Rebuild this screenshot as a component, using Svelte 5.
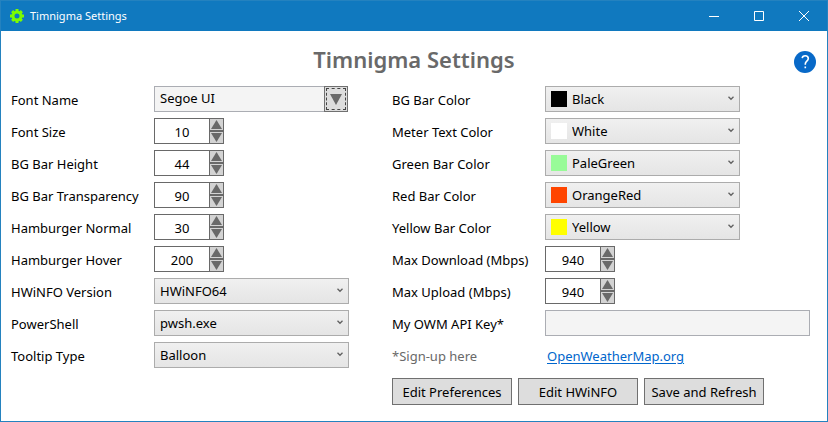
<script>
  let fontName = $state('Segoe UI');
  let apiKey = $state('');

  let leftNumbers = $state([
    { id: 'font-size', label: 'Font Size', value: 10 },
    { id: 'bar-height', label: 'BG Bar Height', value: 44 },
    { id: 'bar-transparency', label: 'BG Bar Transparency', value: 90 },
    { id: 'hamburger-normal', label: 'Hamburger Normal', value: 30 },
    { id: 'hamburger-hover', label: 'Hamburger Hover', value: 200 }
  ]);

  let choices = $state([
    { id: 'hwinfo', label: 'HWiNFO Version', value: 'HWiNFO64', options: ['HWiNFO64', 'HWiNFO32'] },
    { id: 'powershell', label: 'PowerShell', value: 'pwsh.exe', options: ['pwsh.exe', 'powershell.exe'] },
    { id: 'tooltip', label: 'Tooltip Type', value: 'Balloon', options: ['Balloon', 'Standard'] }
  ]);

  const colorNames = ['Black', 'White', 'PaleGreen', 'OrangeRed', 'Yellow'];
  let colors = $state([
    { id: 'bg-color', label: 'BG Bar Color', value: 'Black' },
    { id: 'text-color', label: 'Meter Text Color', value: 'White' },
    { id: 'green-color', label: 'Green Bar Color', value: 'PaleGreen' },
    { id: 'red-color', label: 'Red Bar Color', value: 'OrangeRed' },
    { id: 'yellow-color', label: 'Yellow Bar Color', value: 'Yellow' }
  ]);

  let speeds = $state([
    { id: 'max-download', label: 'Max Download (Mbps)', value: 940 },
    { id: 'max-upload', label: 'Max Upload (Mbps)', value: 940 }
  ]);
</script>

{#snippet spinner(item)}
  <label for={item.id}>{item.label}</label>
  <div class="spinner">
    <input id={item.id} type="text" inputmode="numeric" bind:value={item.value} />
    <div class="steps">
      <button type="button" aria-label="Increase {item.label}" onclick={() => item.value++}>
        <svg width="11" height="9" viewBox="0 0 11 9"><path d="M5.5 0 11 9H0z" /></svg>
      </button>
      <button type="button" aria-label="Decrease {item.label}" onclick={() => item.value--}>
        <svg width="11" height="9" viewBox="0 0 11 9"><path d="M0 0h11L5.5 9z" /></svg>
      </button>
    </div>
  </div>
{/snippet}

{#snippet chevron()}
  <svg class="chevron" width="6" height="5" viewBox="0 0 6 5"><path d="M.5.8 3 3.3 5.5.8" /></svg>
{/snippet}

<div class="window">
  <header class="titlebar">
    <svg class="gear" width="14" height="14" viewBox="0 0 14 14">
      <circle cx="7" cy="7" r="4" />
      <path d="M7 0v2.5M7 11.5V14M0 7h2.5M11.5 7H14M2.1 2.1l1.7 1.7M10.2 10.2l1.7 1.7M2.1 11.9l1.7-1.7M10.2 3.8l1.7-1.7" />
    </svg>
    <span class="caption">Timnigma Settings</span>
    <button type="button" aria-label="Minimize">
      <svg width="10" height="10" viewBox="0 0 10 10"><path d="M0 5.5h10" /></svg>
    </button>
    <button type="button" aria-label="Maximize">
      <svg width="10" height="10" viewBox="0 0 10 10"><path d="M.5.5h9v9h-9z" /></svg>
    </button>
    <button type="button" aria-label="Close">
      <svg width="10" height="10" viewBox="0 0 10 10"><path d="M0 0l10 10M10 0 0 10" /></svg>
    </button>
  </header>

  <main>
    <div class="heading">
      <h1>Timnigma Settings</h1>
      <button type="button" class="help" aria-label="Help">
        <svg width="22" height="22" viewBox="0 0 22 22">
          <circle cx="11" cy="11" r="11" />
          <path d="M8.2 7.2C8.4 5.5 9.6 4.7 11.2 4.7c1.9 0 3.1 1 3.1 2.7 0 1.4-.8 2.1-1.7 2.9-.9.8-1.3 1.4-1.3 2.7v.8M11.3 15.5v1.8" />
        </svg>
      </button>
    </div>

    <form onsubmit={(e) => e.preventDefault()}>
      <div class="fields left">
        <label for="font-name">Font Name</label>
        <div class="font-picker">
          <input id="font-name" type="text" bind:value={fontName} />
          <button type="button" aria-label="Choose font">
            <svg width="12" height="11" viewBox="0 0 12 11"><path d="M0 0h12L6 11z" /></svg>
          </button>
        </div>

        {#each leftNumbers as item (item.id)}
          {@render spinner(item)}
        {/each}

        {#each choices as item (item.id)}
          <label for={item.id}>{item.label}</label>
          <div class="combo">
            <select id={item.id} bind:value={item.value}>
              {#each item.options as option}<option>{option}</option>{/each}
            </select>
            {@render chevron()}
          </div>
        {/each}
      </div>

      <div class="fields right">
        {#each colors as item (item.id)}
          <label for={item.id}>{item.label}</label>
          <div class="combo color">
            <select id={item.id} bind:value={item.value}>
              {#each colorNames as name}<option>{name}</option>{/each}
            </select>
            <span class="swatch" style="background: {item.value}"></span>
            {@render chevron()}
          </div>
        {/each}

        {#each speeds as item (item.id)}
          {@render spinner(item)}
        {/each}

        <label for="api-key">My OWM API Key*</label>
        <input id="api-key" class="key" type="text" bind:value={apiKey} />

        <span class="note">*Sign-up here</span>
        <a href="https://openweathermap.org">OpenWeatherMap.org</a>

        <div class="actions">
          <button type="button">Edit Preferences</button>
          <button type="button">Edit HWiNFO</button>
          <button type="submit">Save and Refresh</button>
        </div>
      </div>
    </form>
  </main>
</div>

<style>
  .window,
  .window * {
    box-sizing: border-box;
  }

  .window {
    display: flex;
    flex-direction: column;
    min-height: 100vh;
    border: 1px solid #2482bf;
    background: #fff;
    color: #000;
    font: 13px/20px 'Segoe UI', 'Noto Sans', sans-serif;
  }

  button,
  input,
  select {
    margin: 0;
    padding: 0;
    border-radius: 0;
    color: inherit;
    font: inherit;
  }

  svg {
    display: block;
  }

  .titlebar {
    display: flex;
    align-items: center;
    height: 30px;
    padding: 0 1px 0 9px;
    background: #1079bf;
    color: #fff;
  }

  .gear {
    fill: none;
    stroke: #7cfc00;
    stroke-width: 3;
  }

  .caption {
    flex: 1;
    padding-left: 6px;
    font-size: 11px;
  }

  .titlebar button {
    display: grid;
    place-items: center;
    width: 45px;
    height: 30px;
    border: 0;
    background: none;
  }

  .titlebar button path {
    fill: none;
    stroke: #fff;
  }

  main {
    padding: 12px 17px 16px 10px;
  }

  .heading {
    position: relative;
    display: flex;
    justify-content: center;
    padding-left: 7px;
    height: 43px;
  }

  h1 {
    margin: 0;
    color: #696969;
    font-size: 22px;
    font-weight: 600;
    line-height: 32px;
  }

  .help {
    position: absolute;
    top: 8px;
    right: -6px;
    border: 0;
    background: none;
  }

  .help circle {
    fill: #0869c8;
  }

  .help path {
    fill: none;
    stroke: #fff;
    stroke-width: 1.6;
  }

  form {
    display: flex;
    gap: 43px;
  }

  .fields {
    display: grid;
    grid-auto-rows: 26px;
    row-gap: 6px;
    align-content: start;
    align-items: center;
  }

  .left {
    grid-template-columns: 143px 195px;
  }

  .right {
    flex: 1;
    grid-template-columns: 153px 1fr;
  }

  label,
  .note,
  a {
    padding-top: 2px;
    white-space: nowrap;
  }

  .note {
    color: #696969;
  }

  a {
    justify-self: start;
    margin-left: 2px;
    color: #0066cc;
    text-underline-offset: 2px;
  }

  .font-picker {
    display: flex;
    width: 194px;
    height: 26px;
  }

  .font-picker input {
    flex: 1;
    min-width: 0;
    padding: 0 5px 2px;
    border: 1px solid #abadb3;
    border-right: 0;
    background: #f4f4f4;
  }

  .font-picker button {
    display: grid;
    place-items: center;
    width: 24px;
    border: 1px solid #707070;
    outline: 1px dashed #444;
    outline-offset: -3px;
    background: #ddd;
  }

  .font-picker path,
  .steps path {
    fill: #696969;
  }

  .spinner {
    display: flex;
    width: 70px;
    height: 26px;
  }

  .spinner input {
    width: 55px;
    padding-top: 1px;
    border: 1px solid #696969;
    border-right: 0;
    background: #fff;
    text-align: center;
  }

  .steps {
    display: flex;
    flex-direction: column;
    width: 15px;
  }

  .steps button {
    display: grid;
    place-items: center;
    flex: 1;
    border: 1px solid #696969;
    background: #d3d3d3;
  }

  .combo {
    position: relative;
    width: 195px;
  }

  select {
    display: block;
    width: 100%;
    height: 26px;
    padding: 0 18px 0 5px;
    border: 1px solid #acacac;
    appearance: none;
    background: linear-gradient(#f0f0f0, #e5e5e5);
  }

  .color select {
    padding-left: 26px;
  }

  .chevron {
    position: absolute;
    top: 10px;
    right: 6px;
    pointer-events: none;
  }

  .chevron path {
    fill: none;
    stroke: #606060;
    stroke-width: 1.3;
  }

  .swatch {
    position: absolute;
    top: 5px;
    left: 6px;
    width: 16px;
    height: 16px;
    pointer-events: none;
  }

  .key {
    width: 100%;
    height: 26px;
    padding: 0 5px;
    border: 1px solid #abadb3;
    background: #f4f4f4;
  }

  .actions {
    display: flex;
    grid-column: 1 / -1;
    gap: 6px;
    padding-top: 4px;
    align-self: start;
  }

  .actions button {
    width: 120px;
    height: 27px;
    padding-top: 1px;
    border: 1px solid #707070;
    background: #ddd;
    white-space: nowrap;
  }
</style>
